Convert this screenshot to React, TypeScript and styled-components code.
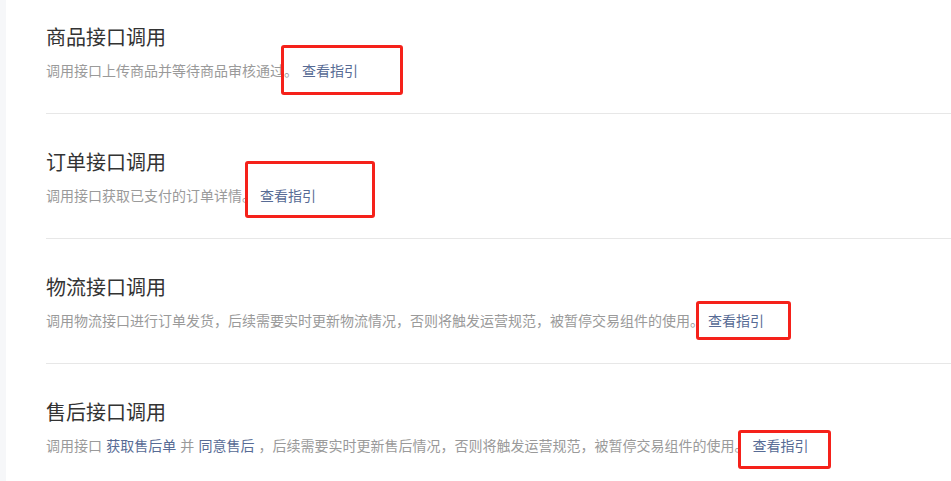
import type { ReactNode } from "react";
import styled, { createGlobalStyle } from "styled-components";

const GlobalStyle = createGlobalStyle`
  html, body {
    margin: 0;
    padding: 0;
    background: #ffffff;
  }
  body {
    font-family: "Noto Sans CJK SC", "Noto Sans", sans-serif;
  }
`;

type Mark = { left: number; top: number; width: number; height: number };

const Page = styled.div`
  display: flex;
  width: 951px;
  height: 481px;
  overflow: hidden;
  background: #ffffff;
`;

const SideStrip = styled.div`
  width: 6px;
  flex-shrink: 0;
  background: #f6f7f9;
`;

const Main = styled.div`
  flex: 1;
  padding-left: 40px;
`;

const Section = styled.div`
  padding: 34px 0 33px;
  border-bottom: 1px solid #e7e7e7;
  &:first-child {
    padding-top: 23px;
  }
`;

const Title = styled.div`
  font-size: 20px;
  line-height: 28px;
  color: #333333;
`;

const Desc = styled.div`
  margin-top: 9px;
  font-size: 14px;
  line-height: 20px;
  color: #9a9a9a;
  white-space: nowrap;
`;

const InlineLink = styled.a`
  margin: 0 1px;
  color: #576b95;
  text-decoration: none;
`;

const Guide = styled.a`
  position: relative;
  margin-left: 4px;
  color: #576b95;
  text-decoration: none;
`;

const Highlight = styled.span<Mark>`
  position: absolute;
  left: ${(p) => p.left}px;
  top: ${(p) => p.top}px;
  width: ${(p) => p.width}px;
  height: ${(p) => p.height}px;
  box-sizing: border-box;
  border: 3px solid #f5211a;
  border-radius: 3px;
  pointer-events: none;
`;

type Step = {
  title: string;
  desc: ReactNode;
  mark: Mark;
};

const steps: Step[] = [
  {
    title: "商品接口调用",
    desc: "调用接口上传商品并等待商品审核通过。",
    mark: { left: -21, top: -15, width: 122, height: 50 },
  },
  {
    title: "订单接口调用",
    desc: "调用接口获取已支付的订单详情。",
    mark: { left: -15, top: -24, width: 130, height: 57 },
  },
  {
    title: "物流接口调用",
    desc: "调用物流接口进行订单发货，后续需要实时更新物流情况，否则将触发运营规范，被暂停交易组件的使用。",
    mark: { left: -12, top: -9, width: 95, height: 39 },
  },
  {
    title: "售后接口调用",
    desc: (
      <>
        调用接口 <InlineLink>获取售后单</InlineLink> 并 <InlineLink>同意售后</InlineLink> ，后续需要实时更新售后情况，否则将触发运营规范，被暂停交易组件的使用。
      </>
    ),
    mark: { left: -15, top: -5, width: 93, height: 39 },
  },
];

const App = () => {
  return (
    <Page>
      <GlobalStyle />
      <SideStrip />
      <Main>
        {steps.map((s) => (
          <Section key={s.title}>
            <Title>{s.title}</Title>
            <Desc>
              {s.desc}
              <Guide>
                查看指引
                <Highlight {...s.mark} />
              </Guide>
            </Desc>
          </Section>
        ))}
      </Main>
    </Page>
  );
};

export default App;
